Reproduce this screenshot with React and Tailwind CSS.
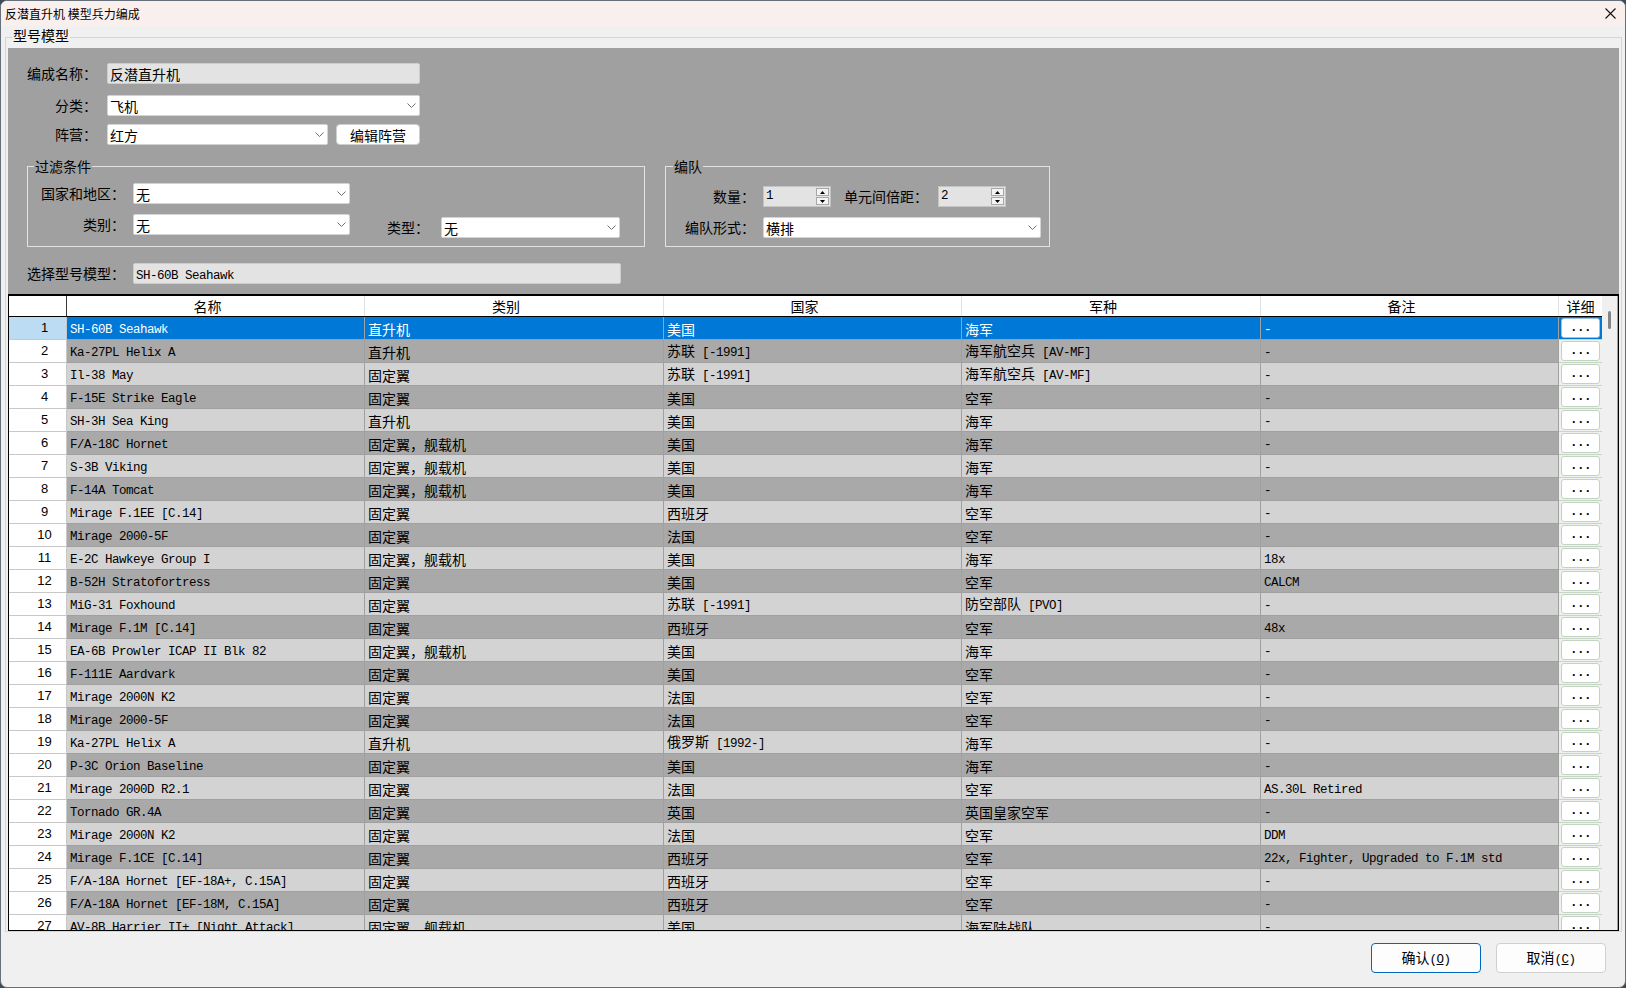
import React from "react";

const CJK = /([\u3000-\u303f\u4e00-\u9fff\uff00-\uffef]+)/;

const rows = [
  ["SH-60B Seahawk", "直升机", "美国", "海军", "-"],
  ["Ka-27PL Helix A", "直升机", "苏联 [-1991]", "海军航空兵 [AV-MF]", "-"],
  ["Il-38 May", "固定翼", "苏联 [-1991]", "海军航空兵 [AV-MF]", "-"],
  ["F-15E Strike Eagle", "固定翼", "美国", "空军", "-"],
  ["SH-3H Sea King", "直升机", "美国", "海军", "-"],
  ["F/A-18C Hornet", "固定翼，舰载机", "美国", "海军", "-"],
  ["S-3B Viking", "固定翼，舰载机", "美国", "海军", "-"],
  ["F-14A Tomcat", "固定翼，舰载机", "美国", "海军", "-"],
  ["Mirage F.1EE [C.14]", "固定翼", "西班牙", "空军", "-"],
  ["Mirage 2000-5F", "固定翼", "法国", "空军", "-"],
  ["E-2C Hawkeye Group I", "固定翼，舰载机", "美国", "海军", "18x"],
  ["B-52H Stratofortress", "固定翼", "美国", "空军", "CALCM"],
  ["MiG-31 Foxhound", "固定翼", "苏联 [-1991]", "防空部队 [PVO]", "-"],
  ["Mirage F.1M [C.14]", "固定翼", "西班牙", "空军", "48x"],
  ["EA-6B Prowler ICAP II Blk 82", "固定翼，舰载机", "美国", "海军", "-"],
  ["F-111E Aardvark", "固定翼", "美国", "空军", "-"],
  ["Mirage 2000N K2", "固定翼", "法国", "空军", "-"],
  ["Mirage 2000-5F", "固定翼", "法国", "空军", "-"],
  ["Ka-27PL Helix A", "直升机", "俄罗斯 [1992-]", "海军", "-"],
  ["P-3C Orion Baseline", "固定翼", "美国", "海军", "-"],
  ["Mirage 2000D R2.1", "固定翼", "法国", "空军", "AS.30L Retired"],
  ["Tornado GR.4A", "固定翼", "英国", "英国皇家空军", "-"],
  ["Mirage 2000N K2", "固定翼", "法国", "空军", "DDM"],
  ["Mirage F.1CE [C.14]", "固定翼", "西班牙", "空军", "22x, Fighter, Upgraded to F.1M std"],
  ["F/A-18A Hornet [EF-18A+, C.15A]", "固定翼", "西班牙", "空军", "-"],
  ["F/A-18A Hornet [EF-18M, C.15A]", "固定翼", "西班牙", "空军", "-"],
  ["AV-8B Harrier II+ [Night Attack]", "固定翼，舰载机", "美国", "海军陆战队", "-"],
];

// latin runs in a Courier-like mono, CJK runs at 14px, sharing one baseline
const Mixed = ({ text, children }) => (
  <span className="whitespace-pre leading-[16px]">
    {text
      .split(CJK)
      .filter(Boolean)
      .map((p, i) =>
        CJK.test(p) ? (
          <span key={i} className="font-['Noto_Sans_CJK_SC',sans-serif] text-[14px]">
            {p}
          </span>
        ) : (
          <span key={i} className="font-['Liberation_Mono','Noto_Sans_CJK_SC',monospace] text-[12.5px] tracking-[-0.5px]">
            {p}
          </span>
        )
      )}
    {children}
  </span>
);

const Chevron = () => (
  <svg width="9" height="5" viewBox="0 0 9 5">
    <path d="M0.5 0.5 L4.5 4.5 L8.5 0.5" stroke="#6e6e6e" strokeWidth="1" fill="none" />
  </svg>
);

const Select = ({ value, w }) => (
  <div className={`flex h-[21px] items-center justify-between rounded-[2px] border border-[#d4d4d4] bg-white pl-[2px] pr-[3px] ${w}`}>
    <span className="text-[14px] leading-none">{value}</span>
    <Chevron />
  </div>
);

const ReadOnly = ({ children, w }) => (
  <div className={`flex h-[21px] items-center rounded-[2px] border border-[#cdcdcd] bg-[#e3e3e3] pl-[2px] ${w}`}>
    {children}
  </div>
);

const Spin = ({ value }) => (
  <div className="flex h-[21px] w-[68px] items-center justify-between border border-[#c4c4c4] bg-[#e3e3e3] pl-[2px] pr-[1px]">
    <span className="font-['Liberation_Mono',monospace] text-[12.5px] leading-none tracking-[-0.5px]">{value}</span>
    <div className="flex h-[17px] w-[13px] flex-col gap-[1px]">
      <div className="flex flex-1 items-center justify-center border border-[#a8a8a8] bg-[#f4f4f4]">
        <svg width="5" height="3" viewBox="0 0 5 3">
          <path d="M0 3 L2.5 0 L5 3 Z" fill="#000" />
        </svg>
      </div>
      <div className="flex flex-1 items-center justify-center border border-[#a8a8a8] bg-[#f4f4f4]">
        <svg width="5" height="3" viewBox="0 0 5 3">
          <path d="M0 0 L2.5 3 L5 0 Z" fill="#000" />
        </svg>
      </div>
    </div>
  </div>
);

const Row = ({ r, n }) => {
  const sel = n === 1;
  const bg = sel ? "bg-[#0078d7] text-white" : n % 2 === 0 ? "bg-[#a9a9a9]" : "bg-[#d3d3d3]";
  return (
    <div className="grid h-[23px] shrink-0 grid-cols-[58px_298px_299px_298px_299px_298px_43px]">
      <div className={`flex items-center justify-center border-b border-r border-[#c8c8c8] pl-[14px] font-['Liberation_Sans',sans-serif] text-[13px] ${sel ? "bg-[#bcdcf4]" : "bg-white"}`}>
        {n}
      </div>
      {r.map((c, j) => (
        <div key={j} className={`flex items-center overflow-hidden whitespace-nowrap border-b border-r border-[#a0a0a0] pl-[3px] ${bg}`}>
          <Mixed text={c} />
        </div>
      ))}
      <div className={`flex items-stretch border-b border-[#c8d6c8] px-[2px] py-[1px] ${sel ? "bg-[#0078d7]" : "bg-[#edf2ed]"}`}>
        <div className={`flex flex-1 items-center justify-center rounded-[3px] border bg-white ${sel ? "border-[#9cc3ea]" : "border-[#c3d3c3]"}`}>
          <span className="font-['Liberation_Mono',monospace] text-[12.5px] font-bold leading-none tracking-[-0.5px]">...</span>
        </div>
      </div>
    </div>
  );
};

export default function App() {
  return (
    <div className="h-[988px] w-[1626px] bg-[#3e4a57]">
      <div className="flex h-full w-full flex-col overflow-hidden rounded-[7px] border border-[#66707a] bg-[#f0f0f0] font-['Noto_Sans_CJK_SC','Noto_Sans',sans-serif] text-black">
        {/* title bar */}
        <div className="flex h-[25px] shrink-0 items-center justify-between bg-[#f9efed] pl-[4px] pr-[9px]">
          <span className="text-[12px] leading-none">反潜直升机 模型兵力编成</span>
          <svg width="11" height="11" viewBox="0 0 11 11">
            <path d="M0.5 0.5 L10.5 10.5 M10.5 0.5 L0.5 10.5" stroke="#111" strokeWidth="1.1" />
          </svg>
        </div>

        <fieldset className="ml-[4px] mr-[3px] border border-[#d6d6d6] px-[2px]">
          <legend className="ml-[4px] px-[1px] pb-[4px] text-[14px] leading-[18px]">型号模型</legend>
          <div className="flex flex-col bg-[#a0a0a0] pt-[15px]">
            <div className="flex items-center">
              <span className="w-[89px] text-right text-[14px]">编成名称：</span>
              <div className="ml-[10px]">
                <ReadOnly w="w-[313px]">
                  <span className="text-[14px] leading-none">反潜直升机</span>
                </ReadOnly>
              </div>
            </div>
            <div className="mt-[11px] flex items-center">
              <span className="w-[89px] text-right text-[14px]">分类：</span>
              <div className="ml-[10px]">
                <Select value="飞机" w="w-[313px]" />
              </div>
            </div>
            <div className="mt-[8px] flex items-center">
              <span className="w-[89px] text-right text-[14px]">阵营：</span>
              <div className="ml-[10px]">
                <Select value="红方" w="w-[221px]" />
              </div>
              <button className="ml-[8px] flex h-[21px] w-[84px] items-center justify-center rounded-[4px] border border-[#cfcfcf] bg-white text-[14px] leading-none">
                编辑阵营
              </button>
            </div>

            <div className="mt-[13px] flex items-start">
              <fieldset className="ml-[19px] w-[618px] border border-[#e2e2e2] pb-[8px]">
                <legend className="ml-[6px] px-[1px] text-[14px] leading-[16px]">过滤条件</legend>
                <div className="flex items-center pt-[9px]">
                  <span className="w-[97px] text-right text-[14px]">国家和地区：</span>
                  <div className="ml-[8px]">
                    <Select value="无" w="w-[217px]" />
                  </div>
                </div>
                <div className="mt-[10px] flex items-start">
                  <div className="flex items-center">
                    <span className="w-[97px] text-right text-[14px]">类别：</span>
                    <div className="ml-[8px]">
                      <Select value="无" w="w-[217px]" />
                    </div>
                  </div>
                  <div className="ml-[37px] mt-[3px] flex items-center">
                    <span className="w-[42px] text-[14px]">类型：</span>
                    <div className="ml-[12px]">
                      <Select value="无" w="w-[179px]" />
                    </div>
                  </div>
                </div>
              </fieldset>

              <fieldset className="ml-[20px] w-[385px] border border-[#e2e2e2] pb-[8px]">
                <legend className="ml-[7px] px-[1px] text-[14px] leading-[16px]">编队</legend>
                <div className="flex items-center pt-[12px]">
                  <span className="w-[89px] text-right text-[14px]">数量：</span>
                  <div className="ml-[8px]">
                    <Spin value="1" />
                  </div>
                  <span className="ml-[13px] w-[84px] text-[14px]">单元间倍距：</span>
                  <div className="ml-[10px]">
                    <Spin value="2" />
                  </div>
                </div>
                <div className="mt-[10px] flex items-center">
                  <span className="w-[89px] text-right text-[14px]">编队形式：</span>
                  <div className="ml-[8px]">
                    <Select value="横排" w="w-[278px]" />
                  </div>
                </div>
              </fieldset>
            </div>

            <div className="mt-[16px] flex items-center">
              <span className="ml-[19px] w-[98px] text-[14px]">选择型号模型：</span>
              <div className="ml-[8px]">
                <ReadOnly w="w-[488px]">
                  <Mixed text="SH-60B Seahawk" />
                </ReadOnly>
              </div>
            </div>

            {/* grid */}
            <div className="mt-[10px] flex border-x border-b border-t-2 border-black">
              <div className="flex w-[1593px] flex-col">
                <div className="grid h-[21px] grid-cols-[58px_298px_299px_298px_299px_298px_43px] border-b border-black bg-white">
                  <div className="border-r border-[#3a3a3a]" />
                  {["名称", "类别", "国家", "军种", "备注"].map((h) => (
                    <div key={h} className="flex items-center justify-center border-r border-[#e2e2e2] pr-[16px] text-[14px] leading-none">
                      {h}
                    </div>
                  ))}
                  <div className="flex items-center justify-center text-[14px] leading-none">详细</div>
                </div>
                <div className="flex h-[613px] flex-col overflow-hidden">
                  {rows.map((r, i) => (
                    <Row key={i} r={r} n={i + 1} />
                  ))}
                </div>
              </div>
              <div className="flex w-[15px] flex-col items-center bg-[#f0f0f0] pt-[15px]">
                <div className="h-[18px] w-[3px] rounded-full bg-[#858585]" />
              </div>
            </div>
          </div>
        </fieldset>

        <div className="mt-[11px] flex justify-end gap-[15px] pr-[19px]">
          <button className="flex h-[30px] w-[110px] items-center justify-center rounded-[4px] border border-[#0067c0] bg-[#fdfdfd]">
            <Mixed text="确认(">
              <span className="font-['Liberation_Mono',monospace] text-[12.5px] tracking-[-0.5px]">
                <span className="underline">O</span>)
              </span>
            </Mixed>
          </button>
          <button className="flex h-[30px] w-[110px] items-center justify-center rounded-[4px] border border-[#d0d0d0] bg-[#fdfdfd]">
            <Mixed text="取消(">
              <span className="font-['Liberation_Mono',monospace] text-[12.5px] tracking-[-0.5px]">
                <span className="underline">C</span>)
              </span>
            </Mixed>
          </button>
        </div>
      </div>
    </div>
  );
}
